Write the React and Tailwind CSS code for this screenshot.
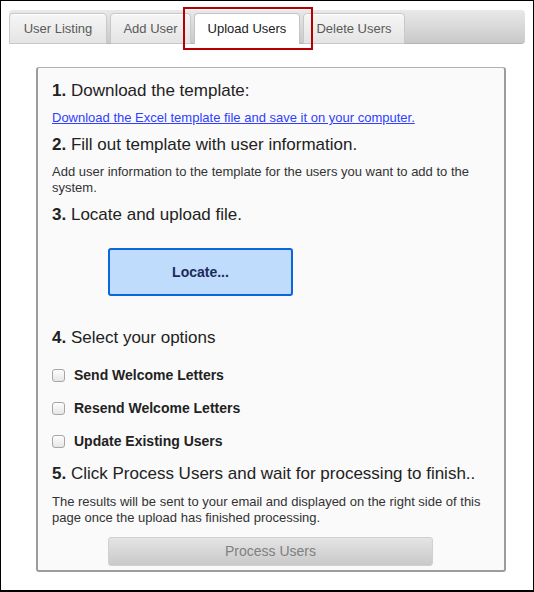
import React from "react";

const font = { fontFamily: '"Liberation Sans", Arial, sans-serif' };

function Tab({ label, active, w }) {
  if (active) {
    return (
      <div className={`relative h-[31px] ${w} flex items-center justify-center rounded-t-[4px] border border-b-0 border-[#c4c4c4] bg-white text-[13px] text-[#222]`}>
        {label}
      </div>
    );
  }
  return (
    <div className={`h-[31px] ${w} flex items-center justify-center rounded-t-[4px] border border-[#c8c8c8] bg-gradient-to-b from-[#f6f6f6] to-[#e4e4e4] text-[13px] text-[#5a5a5a] shadow-[inset_0_1px_0_#fff]`}>
      {label}
    </div>
  );
}

function Heading({ num, text, className = "" }) {
  return (
    <div className={`text-[17px] leading-[20px] text-[#222] ${className}`}>
      <span className="font-bold">{num}</span> {text}
    </div>
  );
}

function Check({ label, className = "" }) {
  return (
    <label className={`flex items-center h-[16px] ${className}`}>
      <span className="w-[13px] h-[13px] rounded-[3px] border border-[#a6a6a6] bg-gradient-to-b from-[#fdfdfd] to-[#e6e6e6] shrink-0" />
      <span className="ml-[9px] text-[14px] leading-[16px] font-bold text-[#222]">{label}</span>
    </label>
  );
}

export default function App() {
  return (
    <div style={font} className="w-[534px] h-[592px] border border-b-2 border-black bg-white overflow-hidden">
      <div className="relative ml-[8px] mt-[9px] w-[516px] h-[34px] rounded-[4px] bg-gradient-to-b from-[#e9e9e9] to-[#c9c9c9] border-b border-[#b4b4b4] pt-[3px] flex gap-[3px]">
        <Tab label="User Listing" w="w-[98px]" />
        <Tab label="Add User" w="w-[81px]" />
        <Tab label="Upload Users" w="w-[106px]" active />
        <Tab label="Delete Users" w="w-[102px]" />
        <div className="absolute left-[174px] top-[-3px] w-[130px] h-[43px] border-2 border-[#b40000] pointer-events-none" />
      </div>

      <div className="ml-[35px] mt-[23px] w-[470px] h-[505px] rounded-[3px] border-2 border-t border-[#9c9c9c] border-t-[#b0b0b0] bg-[#fafafa] px-[14px] pt-[13px]">
        <Heading num="1." text="Download the template:" />
        <a href="#" className="block mt-[9px] text-[13px] leading-[16px] text-[#3040ff] underline">
          Download the Excel template file and save it on your computer.
        </a>
        <Heading num="2." text="Fill out template with user information." className="mt-[9px]" />
        <p className="mt-[9px] text-[13px] leading-[16px] text-[#333]">
          Add user information to the template for the users you want to add to the system.
        </p>
        <Heading num="3." text="Locate and upload file." className="mt-[9px]" />
        <button className="ml-[56px] mt-[23px] w-[185px] h-[48px] rounded-[3px] border-2 border-[#0a66dc] bg-[#c0dcfc] text-[14px] font-bold text-[#1c2a5c]">
          Locate...
        </button>
        <Heading num="4." text="Select your options" className="mt-[32px]" />
        <Check label="Send Welcome Letters" className="mt-[19px]" />
        <Check label="Resend Welcome Letters" className="mt-[17px]" />
        <Check label="Update Existing Users" className="mt-[17px]" />
        <Heading num="5." text="Click Process Users and wait for processing to finish.." className="mt-[15px]" />
        <p className="mt-[10px] text-[13px] leading-[16px] text-[#333]">
          The results will be sent to your email and displayed on the right side of this page once the upload has finished processing.
        </p>
        <button className="block ml-[56px] mt-[11px] w-[325px] h-[29px] rounded-[3px] border border-[#d0d0d0] bg-gradient-to-b from-[#e4e4e4] to-[#c9c9c9] text-[14px] text-[#808080]">
          Process Users
        </button>
      </div>
    </div>
  );
}
